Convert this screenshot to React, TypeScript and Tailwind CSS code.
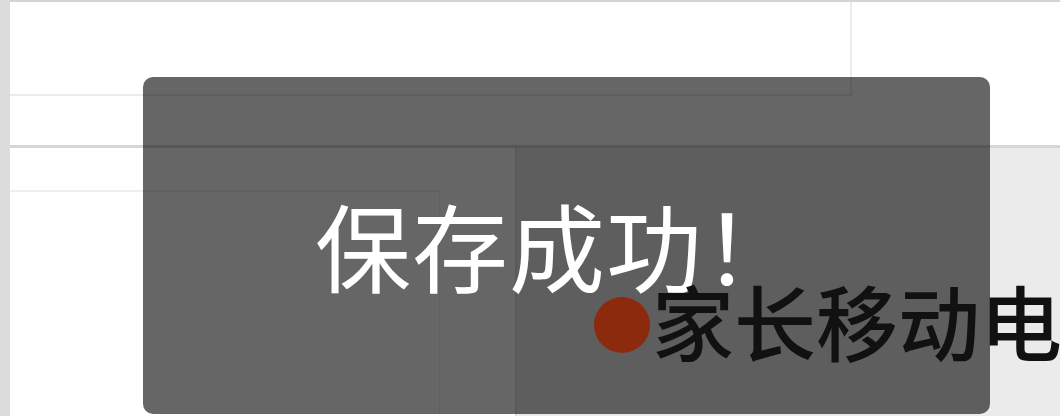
import React from 'react';

const cjk = { fontFamily: '"Noto Sans CJK SC", "Noto Sans", sans-serif' };

export default function App() {
    return (
        <div className="relative w-[1060px] h-[416px] overflow-hidden bg-white flex" style={cjk}>
            {/* left rail */}
            <div className="w-[10px] shrink-0 bg-[#dcdcdc]" />

            {/* table fragment */}
            <div className="flex-1 flex flex-col border-t-2 border-[#d4d4d4] min-w-0">
                <div className="h-[94px] flex shrink-0">
                    <div className="w-[842px] border-r-2 border-b-2 border-[#ececec]" />
                    <div className="flex-1" />
                </div>
                <div className="h-[52px] shrink-0 border-b-[3px] border-[#d6d6d6]" />
                <div className="flex-1 flex min-h-0">
                    <div className="w-[507px] shrink-0 border-r-2 border-[#dedede] flex flex-col">
                        <div className="h-[44px] w-[430px] border-b-2 border-[#eeeeee]" />
                        <div className="flex-1 flex">
                            <div className="w-[430px] border-r border-[#f2f2f2]" />
                        </div>
                    </div>
                    <div className="flex-1 bg-[#ebebeb] pl-[77px] pt-[131px]">
                        <div className="relative z-10 flex items-center whitespace-nowrap">
                            <span className="w-[56px] h-[56px] rounded-full bg-[#8c2a0e] mr-[2px] mt-[10px] shrink-0" />
                            <span className="text-[82px] leading-none font-medium text-[#111]">家长移动电话</span>
                        </div>
                    </div>
                </div>
            </div>

            {/* toast */}
            <div className="absolute left-[143px] top-[77px] w-[847px] h-[337px] rounded-[10px] bg-black/60 flex items-center pl-[172px] pb-[4px]">
                <span className="text-[96px] leading-none text-white whitespace-nowrap tracking-[1px]">保存成功！</span>
            </div>
        </div>
    );
}
